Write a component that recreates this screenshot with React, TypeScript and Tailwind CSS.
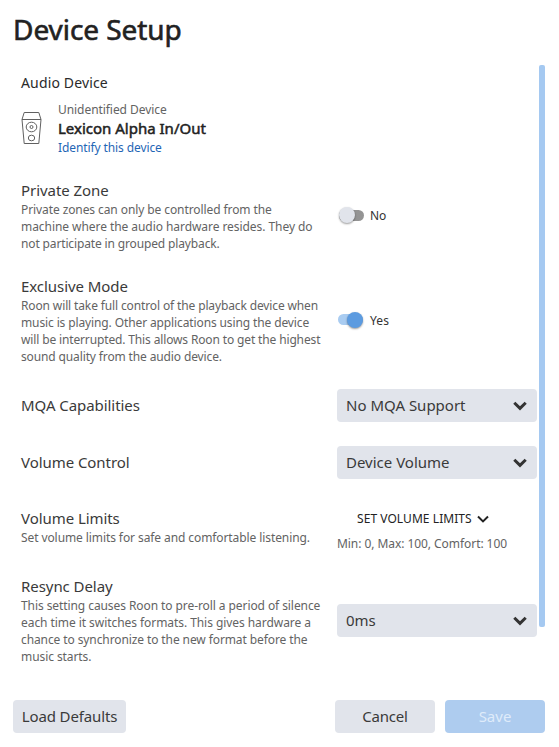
import { ReactNode, useState } from "react";

type Line = [text: string, tracking: string];

function Chevron({ small = false }: { small?: boolean }) {
  return small ? (
    <svg className="h-2 w-3 shrink-0" viewBox="0 0 12 8" fill="none" stroke="#222" strokeWidth="2">
      <path d="M1 1.5 6 6.4 11 1.5" />
    </svg>
  ) : (
    <svg className="h-[10px] w-[14px] shrink-0" viewBox="0 0 14 10" fill="none" stroke="#333" strokeWidth="3">
      <path d="M1.3 1.7 7 7.3 12.7 1.7" />
    </svg>
  );
}

function SpeakerIcon() {
  return (
    <svg className="mb-[2px] h-8 w-[21px] shrink-0" viewBox="0 0 21 32" fill="none" stroke="#606060" strokeWidth="1">
      <path d="M3.2.5h14.6l2.2 7-2.2 24H3.2L1 7.5ZM1 7.5h19" />
      <ellipse cx="10.5" cy="15" rx="5.3" ry="4.8" />
      <circle cx="10.5" cy="15" r="1.5" />
      <ellipse cx="10.5" cy="26" rx="3.2" ry="2.8" />
    </svg>
  );
}

function Toggle({ initial }: { initial: boolean }) {
  const [on, setOn] = useState(initial);
  return (
    <button className="flex items-center pl-px text-left" onClick={() => setOn(!on)}>
      <span className={`mr-[6px] mb-[2px] flex h-[11px] items-center rounded-full ${on ? "w-[25px] justify-end bg-[#a9ccf1]" : "w-[26px] bg-[#949494] bg-clip-content pl-px"}`}>
        <span className={`size-4 rounded-full shadow-[0_1px_2px_rgba(0,0,0,0.4)] ${on ? "bg-[#5c9be0]" : "bg-[#e1e4eb]"}`} />
      </span>
      <span className={`text-[12px] leading-[17px] text-[#333] ${on ? "pl-px tracking-[0.1px]" : "pb-[2px]"}`}>{on ? "Yes" : "No"}</span>
    </button>
  );
}

function Select({ value }: { value: string }) {
  return (
    <button className="flex h-[33px] w-full items-center justify-between rounded-[4px] bg-[#e1e4eb] pr-[10px] pl-[9px] text-[15px] text-[#3a3a3a]">
      <span>{value}</span>
      <Chevron />
    </button>
  );
}

function Row({ title, lines = [], offset = "", children }: { title: string; lines?: Line[]; offset?: string; children: ReactNode }) {
  return (
    <section className="flex items-center">
      <div className={`w-[316px] shrink-0 ${offset}`}>
        <h2 className="text-[15px] leading-[21px] tracking-[-0.06px] text-[#3a3a3a]">{title}</h2>
        {lines.map(([text, tracking]) => (
          <p key={text} className={`text-[12px] leading-[17px] whitespace-nowrap text-[#636363] ${tracking}`}>{text}</p>
        ))}
      </div>
      <div className="w-[200px]">{children}</div>
    </section>
  );
}

export default function App() {
  return (
    <main className="flex h-[747px] w-[559px] flex-col bg-white font-['Noto_Sans',sans-serif]">
      <h1 className="h-[65px] pt-[9px] pl-[13px] text-[28px] leading-[40px] tracking-[-0.06px] text-[#222] [-webkit-text-stroke:0.6px_#222]">Device Setup</h1>
      <div className="flex h-[635px] pl-[21px]">
        <div className="flex w-[516px] flex-col gap-6 pt-2">
          <section>
            <h2 className="text-[14px] leading-[20px] tracking-[0.15px] text-[#2a2a2a]">Audio Device</h2>
            <div className="mt-2 flex items-center">
              <SpeakerIcon />
              <div className="ml-4">
                <p className="text-[12px] leading-[17px] tracking-[-0.06px] text-[#636363]">Unidentified Device</p>
                <p className="text-[15px] leading-[21px] text-[#222] [-webkit-text-stroke:0.5px_#222]">Lexicon Alpha In/Out</p>
                <a className="block text-[12px] leading-[17px] tracking-[-0.1px] text-[#1f66b5]">Identify this device</a>
              </div>
            </div>
          </section>
          <Row
            title="Private Zone"
            lines={[
              ["Private zones can only be controlled from the", "tracking-[-0.09px]"],
              ["machine where the audio hardware resides. They do", "tracking-[-0.06px]"],
              ["not participate in grouped playback.", "tracking-[-0.14px]"],
            ]}
          >
            <Toggle initial={false} />
          </Row>
          <Row
            title="Exclusive Mode"
            lines={[
              ["Roon will take full control of the playback device when", "tracking-[-0.13px]"],
              ["music is playing. Other applications using the device", "tracking-[-0.12px]"],
              ["will be interrupted. This allows Roon to get the highest", "tracking-[-0.14px]"],
              ["sound quality from the audio device.", "tracking-[-0.13px]"],
            ]}
          >
            <Toggle initial />
          </Row>
          <Row title="MQA Capabilities">
            <Select value="No MQA Support" />
          </Row>
          <Row title="Volume Control">
            <Select value="Device Volume" />
          </Row>
          <Row title="Volume Limits" offset="pb-[2px]" lines={[["Set volume limits for safe and comfortable listening.", "tracking-[-0.09px]"]]}>
            <button className="flex h-8 items-center gap-[5px] pl-5 text-[12px] tracking-[0.06px] text-[#222]">
              SET VOLUME LIMITS
              <Chevron small />
            </button>
            <p className="text-[12px] leading-[17px] tracking-[-0.06px] text-[#636363]">Min: 0, Max: 100, Comfort: 100</p>
          </Row>
          <Row
            title="Resync Delay"
            lines={[
              ["This setting causes Roon to pre-roll a period of silence", "tracking-[-0.08px]"],
              ["each time it switches formats. This gives hardware a", "tracking-[-0.06px]"],
              ["chance to synchronize to the new format before the", "tracking-[-0.1px]"],
              ["music starts.", "tracking-[-0.08px]"],
            ]}
          >
            <Select value="0ms" />
          </Row>
        </div>
        <div className="ml-[2px] h-[562px] w-[6px] rounded-[2px] bg-[#a5c9f1]" />
      </div>
      <footer className="flex pr-[14px] pl-[13px] text-[15px] text-[#3a3a3a]">
        <button className="h-[33px] w-[113px] rounded-[4px] bg-[#e1e4eb] tracking-[-0.13px]">Load Defaults</button>
        <button className="ml-auto h-[33px] w-[100px] rounded-[4px] bg-[#e1e4eb] tracking-[-0.2px]">Cancel</button>
        <button className="ml-[10px] h-[33px] w-[100px] rounded-[4px] bg-[#aeccef] text-[#dfebfa]">Save</button>
      </footer>
    </main>
  );
}
